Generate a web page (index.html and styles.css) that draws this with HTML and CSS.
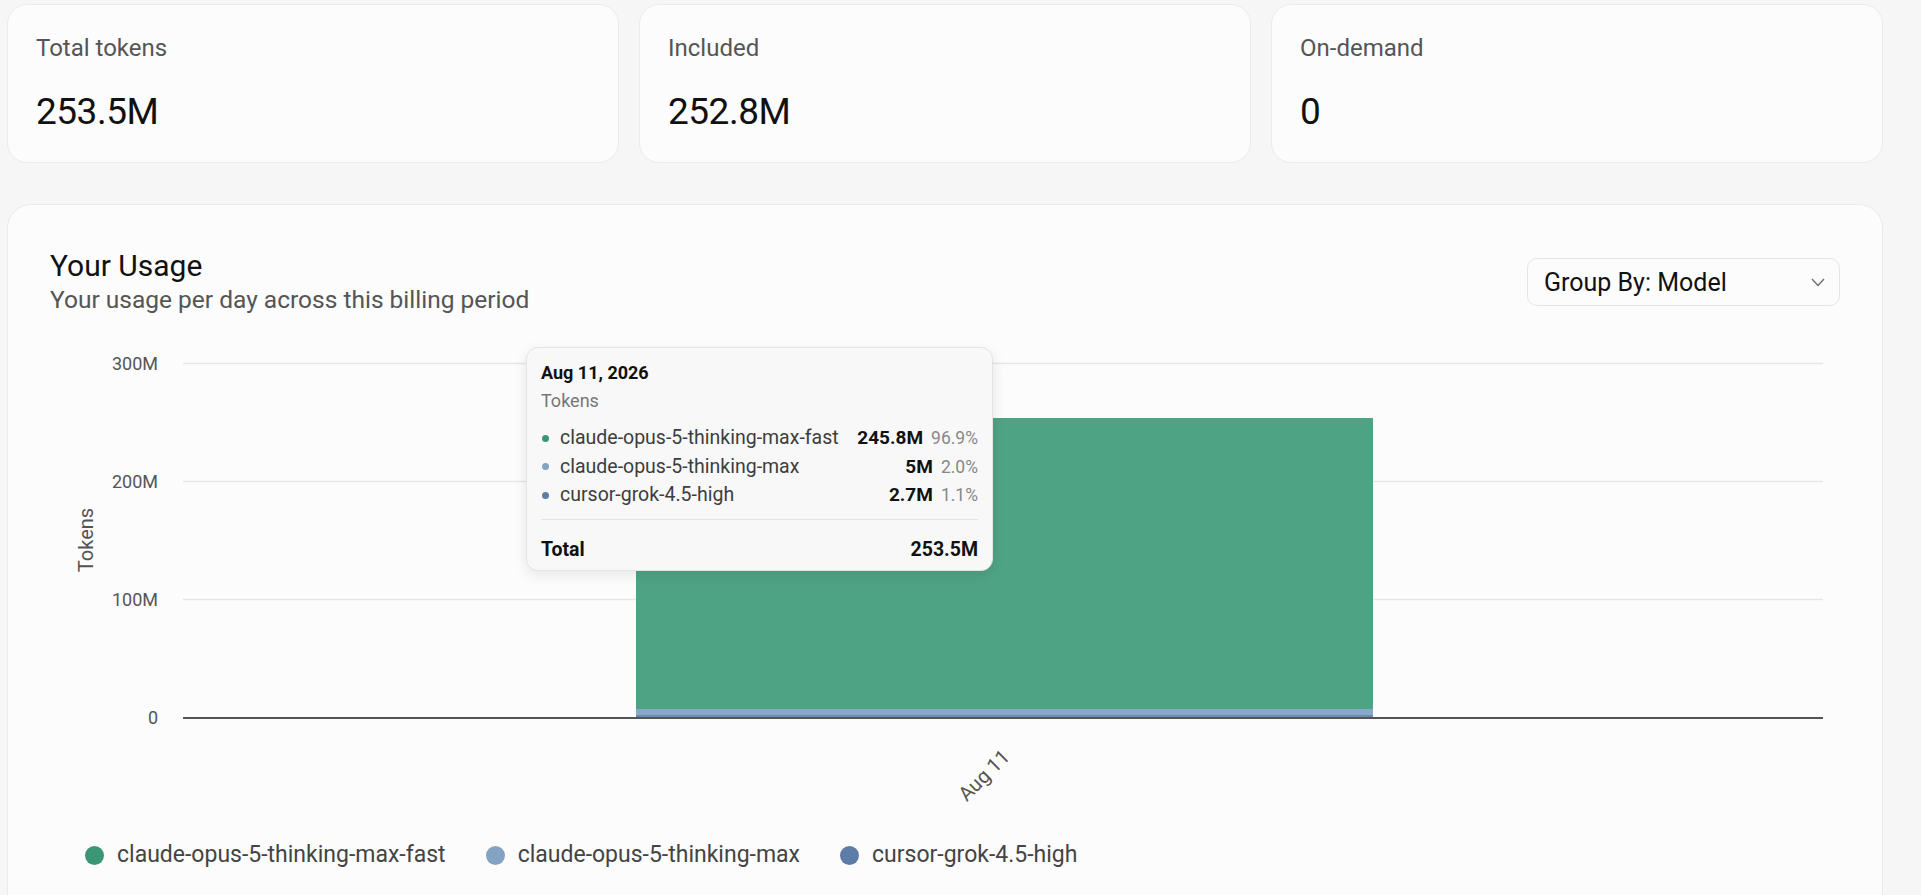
FILE: index.html
```html
<!DOCTYPE html>
<html lang="en">
<head>
<meta charset="utf-8">
<title>Usage</title>
<link rel="stylesheet" href="styles.css">
</head>
<body>
<div class="page">
  <div class="stats">
    <div class="stat">
      <div class="stat-label">Total tokens</div>
      <div class="stat-value">253.5M</div>
    </div>
    <div class="stat">
      <div class="stat-label">Included</div>
      <div class="stat-value">252.8M</div>
    </div>
    <div class="stat">
      <div class="stat-label">On-demand</div>
      <div class="stat-value">0</div>
    </div>
  </div>

  <section class="usage">
    <header class="usage-head">
      <div class="usage-titles">
        <h2 class="usage-title">Your Usage</h2>
        <p class="usage-sub">Your usage per day across this billing period</p>
      </div>
      <button class="select" type="button">
        <span>Group By: Model</span>
        <svg class="chev" width="14" height="9" viewBox="0 0 14 9"><polyline points="1,1 7,7.5 13,1" fill="none" stroke="#6b6b6b" stroke-width="1.3"/></svg>
      </button>
    </header>

    <div class="chart">
      <svg class="chart-svg" width="1790" height="480" viewBox="0 0 1790 480">
        <line class="grid" x1="133" y1="33.5" x2="1773" y2="33.5"/>
        <line class="grid" x1="133" y1="151.5" x2="1773" y2="151.5"/>
        <line class="grid" x1="133" y1="269.5" x2="1773" y2="269.5"/>
        <text class="tick" x="108" y="33" text-anchor="end" dominant-baseline="central">300M</text>
        <text class="tick" x="108" y="151" text-anchor="end" dominant-baseline="central">200M</text>
        <text class="tick" x="108" y="269" text-anchor="end" dominant-baseline="central">100M</text>
        <text class="tick" x="108" y="387" text-anchor="end" dominant-baseline="central">0</text>
        <text class="axis-title" transform="translate(36,210) rotate(-90)" text-anchor="middle" dominant-baseline="central">Tokens</text>
        <rect class="bar-fast" x="586" y="88" width="737" height="291"/>
        <rect class="bar-max" x="586" y="379" width="737" height="6"/>
        <rect class="bar-grok" x="586" y="385" width="737" height="3"/>
        <line class="axis" x1="133" y1="388" x2="1773" y2="388"/>
        <text class="tick tick-x" transform="translate(961,428) rotate(-45)" text-anchor="end">Aug 11</text>
      </svg>

      <div class="tooltip">
        <div class="tt-date">Aug 11, 2026</div>
        <div class="tt-metric">Tokens</div>
        <ul class="tt-rows">
          <li class="tt-row"><span class="tt-dot dot-fast"></span><span class="tt-name">claude-opus-5-thinking-max-fast</span><span class="tt-value">245.8M</span><span class="tt-pct">96.9%</span></li>
          <li class="tt-row"><span class="tt-dot dot-max"></span><span class="tt-name">claude-opus-5-thinking-max</span><span class="tt-value">5M</span><span class="tt-pct">2.0%</span></li>
          <li class="tt-row"><span class="tt-dot dot-grok"></span><span class="tt-name">cursor-grok-4.5-high</span><span class="tt-value">2.7M</span><span class="tt-pct">1.1%</span></li>
        </ul>
        <div class="tt-total"><span>Total</span><span>253.5M</span></div>
      </div>
    </div>

    <div class="legend">
      <div class="legend-item"><span class="legend-dot dot-fast"></span><span>claude-opus-5-thinking-max-fast</span></div>
      <div class="legend-item"><span class="legend-dot dot-max"></span><span>claude-opus-5-thinking-max</span></div>
      <div class="legend-item"><span class="legend-dot dot-grok"></span><span>cursor-grok-4.5-high</span></div>
    </div>
  </section>
</div>
</body>
</html>
```

FILE: styles.css
```css
* { box-sizing: border-box; }

html, body {
  margin: 0;
  padding: 0;
  background: #f6f6f6;
}

body {
  font-family: Roboto, "Noto Sans", "Liberation Sans", sans-serif;
  color: #111;
  overflow: hidden;
}

.page {
  width: 1883px;
  padding: 4px 0 0 7px;
}

.stats {
  display: grid;
  grid-template-columns: repeat(3, 1fr);
  gap: 20px;
}

.stat {
  background: #fcfcfc;
  border: 1px solid #ebebeb;
  border-radius: 20px;
  padding: 27px 28px 28px;
}

.stat-label {
  font-size: 24px;
  line-height: 32px;
  color: #555;
}

.stat-value {
  margin-top: 26px;
  font-size: 37px;
  line-height: 44px;
  letter-spacing: -0.5px;
  color: #111;
}

.usage {
  margin-top: 41px;
  background: #fcfcfc;
  border: 1px solid #ebebeb;
  border-radius: 24px;
  padding: 43px 42px 60px;
}

.usage-head {
  display: flex;
  justify-content: space-between;
  align-items: center;
}

.usage-title {
  margin: 0;
  font-size: 30px;
  line-height: 36px;
  font-weight: 400;
  color: #111;
}

.usage-sub {
  margin: 0;
  font-size: 24.5px;
  line-height: 32px;
  color: #555;
}

.select {
  width: 313px;
  height: 48px;
  display: flex;
  align-items: center;
  justify-content: space-between;
  padding: 0 14px 0 16px;
  background: #fcfcfc;
  border: 1px solid #e5e5e5;
  border-radius: 10px;
  font-family: inherit;
  font-size: 25px;
  color: #111;
}

.chev { display: block; }

.chart {
  position: relative;
  margin-top: 14px;
}

.chart-svg { display: block; }

.grid {
  stroke: #e6e6e6;
  stroke-width: 1.5;
}

.axis {
  stroke: #555;
  stroke-width: 2;
}

.tick {
  font-family: Roboto, "Noto Sans", sans-serif;
  font-size: 18px;
  fill: #555;
}

.tick-x {
  font-size: 20px;
}

.axis-title {
  font-family: Roboto, "Noto Sans", sans-serif;
  font-size: 20px;
  fill: #555;
}

.bar-fast { fill: #4fa385; }
.bar-max { fill: #8aa9c9; }
.bar-grok { fill: #6c8bb4; }

.tooltip {
  position: absolute;
  left: 476px;
  top: 17px;
  width: 467px;
  padding: 13px 14px 6px;
  background: #f8f8f8;
  border: 1px solid #e4e4e4;
  border-radius: 12px;
  box-shadow: 0 4px 14px rgba(0, 0, 0, 0.09);
}

.tt-date {
  font-size: 18px;
  line-height: 24px;
  font-weight: 700;
  color: #111;
}

.tt-metric {
  margin-top: 4px;
  font-size: 18px;
  line-height: 24px;
  color: #777;
}

.tt-rows {
  list-style: none;
  margin: 11px 0 0;
  padding: 0;
}

.tt-row {
  display: flex;
  align-items: center;
  font-size: 19.5px;
  line-height: 28.5px;
}

.tt-dot {
  width: 7px;
  height: 7px;
  border-radius: 50%;
  margin: 0 11px 0 1px;
  flex: none;
}

.tt-name {
  color: #3d3d3d;
}

.tt-value {
  margin-left: auto;
  font-size: 19px;
  font-weight: 700;
  color: #111;
}

.tt-pct {
  margin-left: 8px;
  font-size: 17.5px;
  color: #888;
}

.tt-total {
  display: flex;
  justify-content: space-between;
  margin-top: 9px;
  padding-top: 16px;
  border-top: 1px solid #e3e3e3;
  font-size: 19.5px;
  line-height: 28px;
  font-weight: 700;
  color: #111;
}

.dot-fast { background: #3b9676; }
.dot-max { background: #84a2c2; }
.dot-grok { background: #5e7ca8; }

.legend {
  display: flex;
  align-items: center;
  gap: 40px;
  margin-top: 30px;
  padding-left: 35px;
}

.legend-item {
  display: flex;
  align-items: center;
  gap: 13px;
  font-size: 23px;
  line-height: 30px;
  color: #444;
}

.legend-dot {
  width: 19px;
  height: 19px;
  border-radius: 50%;
  flex: none;
}
```
